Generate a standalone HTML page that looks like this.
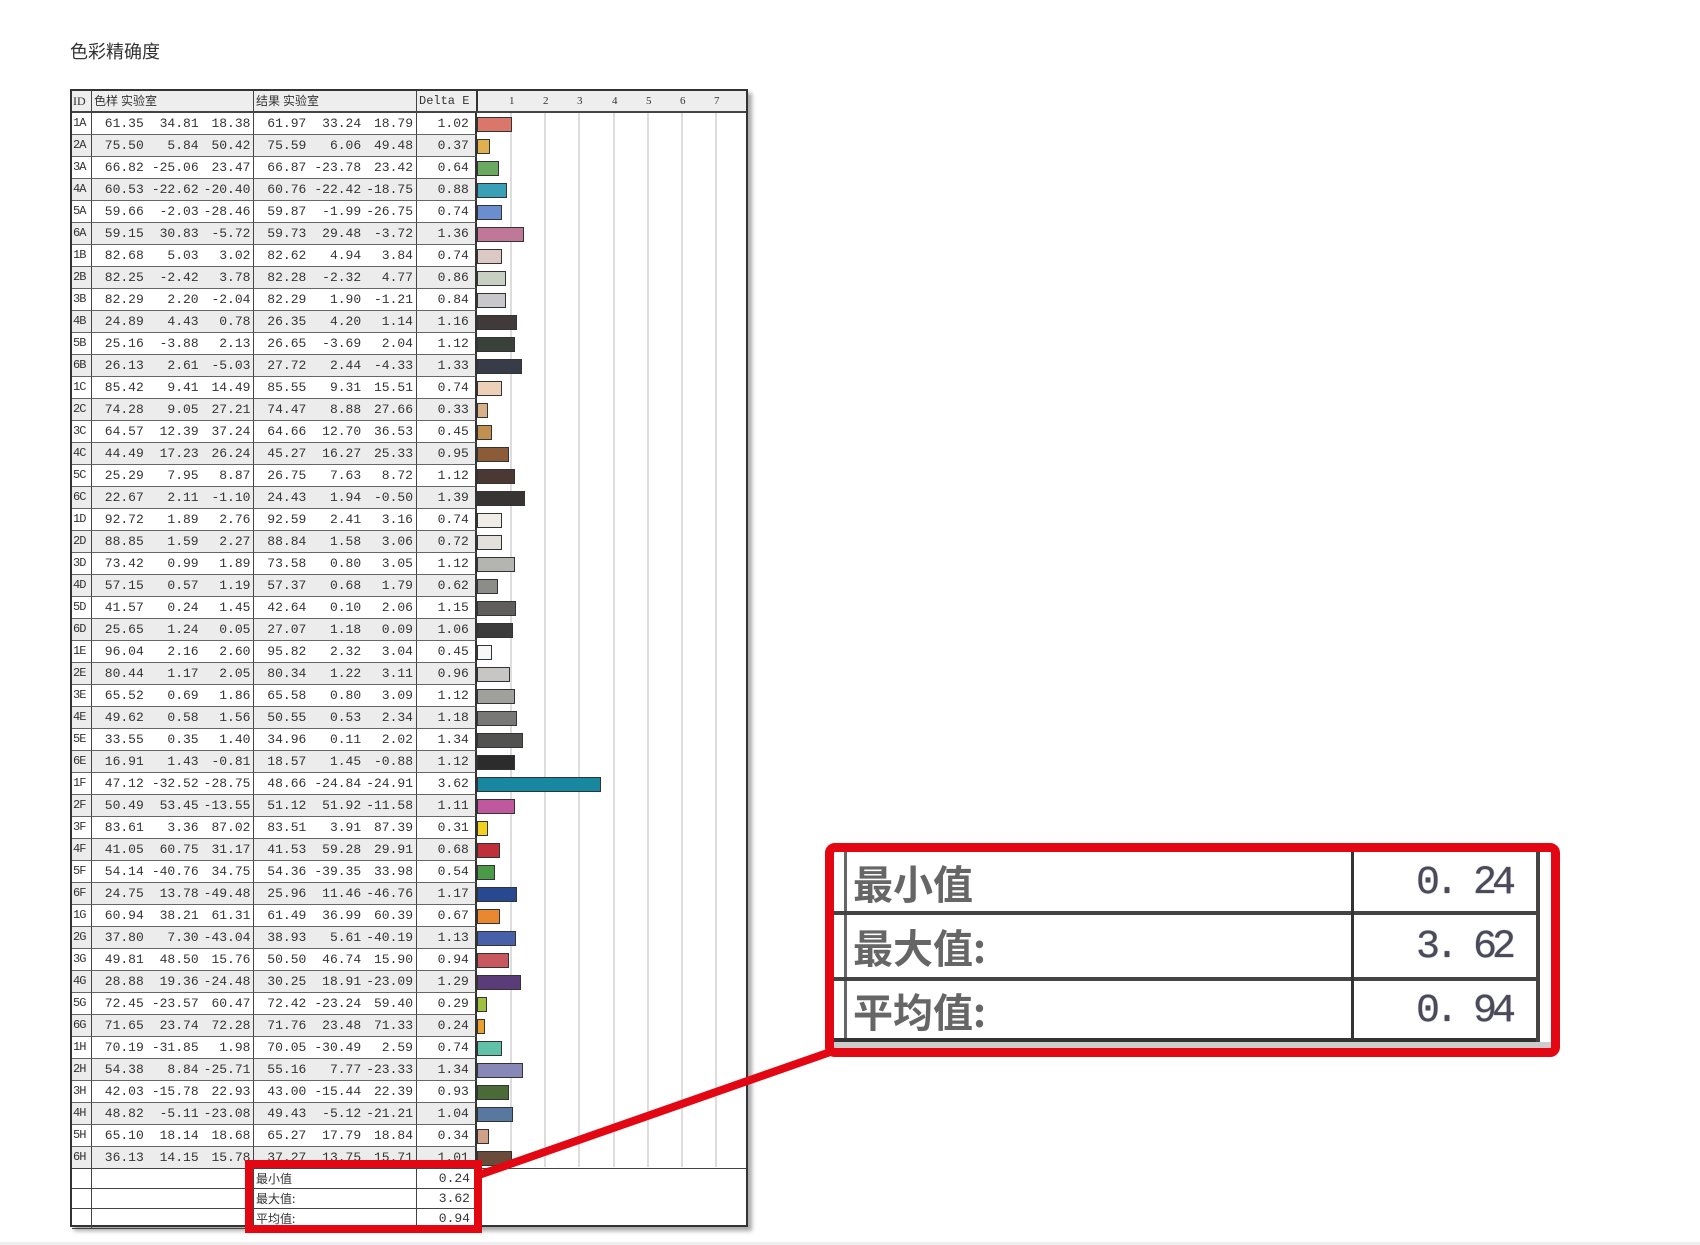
<!DOCTYPE html>
<html><head><meta charset="utf-8"><style>
*{margin:0;padding:0;box-sizing:border-box}
body{width:1700px;height:1245px;background:#fff;position:relative;overflow:hidden;font-family:"Liberation Mono","Noto Sans CJK SC",monospace;color:#333}
.title{position:absolute;left:70px;top:38px;font:18px "Liberation Sans","Noto Sans CJK SC",sans-serif;color:#333}
.tbl{position:absolute;left:70px;top:89px;width:678px;height:1138px;border:2px solid #333;box-shadow:4px 4px 4px #aaa;background:#fff}
.grid{position:absolute;left:406px;top:0;width:270px;height:1076px}
.grid b{position:absolute;top:0;bottom:0;width:2px;background:#ddd}
.r{position:absolute;left:0;width:674px;height:22px;display:flex;font-size:13px;line-height:21px}
.r span{display:block;height:22px;border-bottom:1px solid #666;text-align:right;padding-right:3px}
.r .id{width:20px;text-align:left;padding:0 0 0 1px;border-right:1px solid #444;font-size:12px;letter-spacing:-1px}
.r .n{width:55px}.r .n3{width:53px;border-right:1px solid #444}
.r .de{width:60px;border-right:2px solid #333;padding-right:6px}
.r.g span{background:#ececec}
.r .c{width:270px;border-bottom:none;position:relative;background:transparent!important}
.r .c i{position:absolute;left:0;top:4px;height:15px;border:1.5px solid #333;display:block}
.hd{position:absolute;left:0;top:0;width:674px;height:22px;background:#eee;border-bottom:2px solid #444;font:12px "Liberation Serif","Noto Sans CJK SC",serif;line-height:20px}
.hd span{position:absolute;top:0;height:20px}
.s{position:absolute;left:0;width:406px;height:20px;border-bottom:1px solid #444;font:12px "Noto Sans CJK SC",sans-serif;line-height:19px}
.s span{position:absolute;top:0;height:19px}
.big{position:absolute;left:825px;top:843px;width:735px;height:214px;border:9px solid #e30613;border-radius:10px;background:#fff;overflow:hidden}
.lb{position:absolute;left:19px;font:bold 40px 'Noto Sans CJK SC',sans-serif;line-height:52px;color:#666}
.vl{position:absolute;right:40px;font:40px 'Liberation Mono',monospace;line-height:52px;color:#4a4a5a;letter-spacing:-5px;text-shadow:0 0 1px #4a4a5a}
</style></head><body>
<div class="title">色彩精确度</div>
<div class="tbl">
<div class="hd">
<span style="left:1px">ID</span><span style="left:19px;top:0;bottom:0;border-left:1px solid #444;height:20px"></span>
<span style="left:22px">色样 实验室</span>
<span style="left:181px;border-left:1px solid #444;height:20px;padding-left:2px">结果 实验室</span>
<span style="left:344px;border-left:1px solid #444;height:20px;padding-left:2px;font-family:'Liberation Mono';font-size:12px">Delta E</span>
<span style="left:404px;border-left:2px solid #333;height:20px"></span>
<span style="left:437px;font-size:11px">1</span><span style="left:471px;font-size:11px">2</span><span style="left:505px;font-size:11px">3</span><span style="left:540px;font-size:11px">4</span><span style="left:574px;font-size:11px">5</span><span style="left:608px;font-size:11px">6</span><span style="left:642px;font-size:11px">7</span>
</div>
<div class="grid" style="top:22px;height:1054px"><b style="left:32px"></b><b style="left:66px"></b><b style="left:100px"></b><b style="left:135px"></b><b style="left:169px"></b><b style="left:203px"></b><b style="left:237px"></b></div>
<div class="r" style="top:22px"><span class="id">1A</span><span class="n">61.35</span><span class="n">34.81</span><span class="n n3">18.38</span><span class="n">61.97</span><span class="n">33.24</span><span class="n n3">18.79</span><span class="de">1.02</span><span class="c"><i style="width:35px;background:#d9776a"></i></span></div>
<div class="r g" style="top:44px"><span class="id">2A</span><span class="n">75.50</span><span class="n">5.84</span><span class="n n3">50.42</span><span class="n">75.59</span><span class="n">6.06</span><span class="n n3">49.48</span><span class="de">0.37</span><span class="c"><i style="width:13px;background:#e0b050"></i></span></div>
<div class="r" style="top:66px"><span class="id">3A</span><span class="n">66.82</span><span class="n">-25.06</span><span class="n n3">23.47</span><span class="n">66.87</span><span class="n">-23.78</span><span class="n n3">23.42</span><span class="de">0.64</span><span class="c"><i style="width:22px;background:#6aaa60"></i></span></div>
<div class="r g" style="top:88px"><span class="id">4A</span><span class="n">60.53</span><span class="n">-22.62</span><span class="n n3">-20.40</span><span class="n">60.76</span><span class="n">-22.42</span><span class="n n3">-18.75</span><span class="de">0.88</span><span class="c"><i style="width:30px;background:#3aa0b8"></i></span></div>
<div class="r" style="top:110px"><span class="id">5A</span><span class="n">59.66</span><span class="n">-2.03</span><span class="n n3">-28.46</span><span class="n">59.87</span><span class="n">-1.99</span><span class="n n3">-26.75</span><span class="de">0.74</span><span class="c"><i style="width:25px;background:#6a8ed0"></i></span></div>
<div class="r g" style="top:132px"><span class="id">6A</span><span class="n">59.15</span><span class="n">30.83</span><span class="n n3">-5.72</span><span class="n">59.73</span><span class="n">29.48</span><span class="n n3">-3.72</span><span class="de">1.36</span><span class="c"><i style="width:47px;background:#c07898"></i></span></div>
<div class="r" style="top:154px"><span class="id">1B</span><span class="n">82.68</span><span class="n">5.03</span><span class="n n3">3.02</span><span class="n">82.62</span><span class="n">4.94</span><span class="n n3">3.84</span><span class="de">0.74</span><span class="c"><i style="width:25px;background:#dcc8c4"></i></span></div>
<div class="r g" style="top:176px"><span class="id">2B</span><span class="n">82.25</span><span class="n">-2.42</span><span class="n n3">3.78</span><span class="n">82.28</span><span class="n">-2.32</span><span class="n n3">4.77</span><span class="de">0.86</span><span class="c"><i style="width:29px;background:#c8d0c4"></i></span></div>
<div class="r" style="top:198px"><span class="id">3B</span><span class="n">82.29</span><span class="n">2.20</span><span class="n n3">-2.04</span><span class="n">82.29</span><span class="n">1.90</span><span class="n n3">-1.21</span><span class="de">0.84</span><span class="c"><i style="width:29px;background:#c8c8cc"></i></span></div>
<div class="r g" style="top:220px"><span class="id">4B</span><span class="n">24.89</span><span class="n">4.43</span><span class="n n3">0.78</span><span class="n">26.35</span><span class="n">4.20</span><span class="n n3">1.14</span><span class="de">1.16</span><span class="c"><i style="width:40px;background:#403a3a"></i></span></div>
<div class="r" style="top:242px"><span class="id">5B</span><span class="n">25.16</span><span class="n">-3.88</span><span class="n n3">2.13</span><span class="n">26.65</span><span class="n">-3.69</span><span class="n n3">2.04</span><span class="de">1.12</span><span class="c"><i style="width:38px;background:#3a403a"></i></span></div>
<div class="r g" style="top:264px"><span class="id">6B</span><span class="n">26.13</span><span class="n">2.61</span><span class="n n3">-5.03</span><span class="n">27.72</span><span class="n">2.44</span><span class="n n3">-4.33</span><span class="de">1.33</span><span class="c"><i style="width:45px;background:#383c48"></i></span></div>
<div class="r" style="top:286px"><span class="id">1C</span><span class="n">85.42</span><span class="n">9.41</span><span class="n n3">14.49</span><span class="n">85.55</span><span class="n">9.31</span><span class="n n3">15.51</span><span class="de">0.74</span><span class="c"><i style="width:25px;background:#ecd0b8"></i></span></div>
<div class="r g" style="top:308px"><span class="id">2C</span><span class="n">74.28</span><span class="n">9.05</span><span class="n n3">27.21</span><span class="n">74.47</span><span class="n">8.88</span><span class="n n3">27.66</span><span class="de">0.33</span><span class="c"><i style="width:11px;background:#d8b088"></i></span></div>
<div class="r" style="top:330px"><span class="id">3C</span><span class="n">64.57</span><span class="n">12.39</span><span class="n n3">37.24</span><span class="n">64.66</span><span class="n">12.70</span><span class="n n3">36.53</span><span class="de">0.45</span><span class="c"><i style="width:15px;background:#c09050"></i></span></div>
<div class="r g" style="top:352px"><span class="id">4C</span><span class="n">44.49</span><span class="n">17.23</span><span class="n n3">26.24</span><span class="n">45.27</span><span class="n">16.27</span><span class="n n3">25.33</span><span class="de">0.95</span><span class="c"><i style="width:32px;background:#8c5c38"></i></span></div>
<div class="r" style="top:374px"><span class="id">5C</span><span class="n">25.29</span><span class="n">7.95</span><span class="n n3">8.87</span><span class="n">26.75</span><span class="n">7.63</span><span class="n n3">8.72</span><span class="de">1.12</span><span class="c"><i style="width:38px;background:#4a3832"></i></span></div>
<div class="r g" style="top:396px"><span class="id">6C</span><span class="n">22.67</span><span class="n">2.11</span><span class="n n3">-1.10</span><span class="n">24.43</span><span class="n">1.94</span><span class="n n3">-0.50</span><span class="de">1.39</span><span class="c"><i style="width:48px;background:#383434"></i></span></div>
<div class="r" style="top:418px"><span class="id">1D</span><span class="n">92.72</span><span class="n">1.89</span><span class="n n3">2.76</span><span class="n">92.59</span><span class="n">2.41</span><span class="n n3">3.16</span><span class="de">0.74</span><span class="c"><i style="width:25px;background:#f0ece8"></i></span></div>
<div class="r g" style="top:440px"><span class="id">2D</span><span class="n">88.85</span><span class="n">1.59</span><span class="n n3">2.27</span><span class="n">88.84</span><span class="n">1.58</span><span class="n n3">3.06</span><span class="de">0.72</span><span class="c"><i style="width:25px;background:#e4e0dc"></i></span></div>
<div class="r" style="top:462px"><span class="id">3D</span><span class="n">73.42</span><span class="n">0.99</span><span class="n n3">1.89</span><span class="n">73.58</span><span class="n">0.80</span><span class="n n3">3.05</span><span class="de">1.12</span><span class="c"><i style="width:38px;background:#b4b4b0"></i></span></div>
<div class="r g" style="top:484px"><span class="id">4D</span><span class="n">57.15</span><span class="n">0.57</span><span class="n n3">1.19</span><span class="n">57.37</span><span class="n">0.68</span><span class="n n3">1.79</span><span class="de">0.62</span><span class="c"><i style="width:21px;background:#8c8c88"></i></span></div>
<div class="r" style="top:506px"><span class="id">5D</span><span class="n">41.57</span><span class="n">0.24</span><span class="n n3">1.45</span><span class="n">42.64</span><span class="n">0.10</span><span class="n n3">2.06</span><span class="de">1.15</span><span class="c"><i style="width:39px;background:#605e5c"></i></span></div>
<div class="r g" style="top:528px"><span class="id">6D</span><span class="n">25.65</span><span class="n">1.24</span><span class="n n3">0.05</span><span class="n">27.07</span><span class="n">1.18</span><span class="n n3">0.09</span><span class="de">1.06</span><span class="c"><i style="width:36px;background:#3c3c3c"></i></span></div>
<div class="r" style="top:550px"><span class="id">1E</span><span class="n">96.04</span><span class="n">2.16</span><span class="n n3">2.60</span><span class="n">95.82</span><span class="n">2.32</span><span class="n n3">3.04</span><span class="de">0.45</span><span class="c"><i style="width:15px;background:#f8f8f8"></i></span></div>
<div class="r g" style="top:572px"><span class="id">2E</span><span class="n">80.44</span><span class="n">1.17</span><span class="n n3">2.05</span><span class="n">80.34</span><span class="n">1.22</span><span class="n n3">3.11</span><span class="de">0.96</span><span class="c"><i style="width:33px;background:#c8c6c4"></i></span></div>
<div class="r" style="top:594px"><span class="id">3E</span><span class="n">65.52</span><span class="n">0.69</span><span class="n n3">1.86</span><span class="n">65.58</span><span class="n">0.80</span><span class="n n3">3.09</span><span class="de">1.12</span><span class="c"><i style="width:38px;background:#a0a09c"></i></span></div>
<div class="r g" style="top:616px"><span class="id">4E</span><span class="n">49.62</span><span class="n">0.58</span><span class="n n3">1.56</span><span class="n">50.55</span><span class="n">0.53</span><span class="n n3">2.34</span><span class="de">1.18</span><span class="c"><i style="width:40px;background:#787876"></i></span></div>
<div class="r" style="top:638px"><span class="id">5E</span><span class="n">33.55</span><span class="n">0.35</span><span class="n n3">1.40</span><span class="n">34.96</span><span class="n">0.11</span><span class="n n3">2.02</span><span class="de">1.34</span><span class="c"><i style="width:46px;background:#525250"></i></span></div>
<div class="r g" style="top:660px"><span class="id">6E</span><span class="n">16.91</span><span class="n">1.43</span><span class="n n3">-0.81</span><span class="n">18.57</span><span class="n">1.45</span><span class="n n3">-0.88</span><span class="de">1.12</span><span class="c"><i style="width:38px;background:#2c2c2c"></i></span></div>
<div class="r" style="top:682px"><span class="id">1F</span><span class="n">47.12</span><span class="n">-32.52</span><span class="n n3">-28.75</span><span class="n">48.66</span><span class="n">-24.84</span><span class="n n3">-24.91</span><span class="de">3.62</span><span class="c"><i style="width:124px;background:#1888a0"></i></span></div>
<div class="r g" style="top:704px"><span class="id">2F</span><span class="n">50.49</span><span class="n">53.45</span><span class="n n3">-13.55</span><span class="n">51.12</span><span class="n">51.92</span><span class="n n3">-11.58</span><span class="de">1.11</span><span class="c"><i style="width:38px;background:#c058a0"></i></span></div>
<div class="r" style="top:726px"><span class="id">3F</span><span class="n">83.61</span><span class="n">3.36</span><span class="n n3">87.02</span><span class="n">83.51</span><span class="n">3.91</span><span class="n n3">87.39</span><span class="de">0.31</span><span class="c"><i style="width:11px;background:#f0d020"></i></span></div>
<div class="r g" style="top:748px"><span class="id">4F</span><span class="n">41.05</span><span class="n">60.75</span><span class="n n3">31.17</span><span class="n">41.53</span><span class="n">59.28</span><span class="n n3">29.91</span><span class="de">0.68</span><span class="c"><i style="width:23px;background:#c03038"></i></span></div>
<div class="r" style="top:770px"><span class="id">5F</span><span class="n">54.14</span><span class="n">-40.76</span><span class="n n3">34.75</span><span class="n">54.36</span><span class="n">-39.35</span><span class="n n3">33.98</span><span class="de">0.54</span><span class="c"><i style="width:18px;background:#4a9a48"></i></span></div>
<div class="r g" style="top:792px"><span class="id">6F</span><span class="n">24.75</span><span class="n">13.78</span><span class="n n3">-49.48</span><span class="n">25.96</span><span class="n">11.46</span><span class="n n3">-46.76</span><span class="de">1.17</span><span class="c"><i style="width:40px;background:#284890"></i></span></div>
<div class="r" style="top:814px"><span class="id">1G</span><span class="n">60.94</span><span class="n">38.21</span><span class="n n3">61.31</span><span class="n">61.49</span><span class="n">36.99</span><span class="n n3">60.39</span><span class="de">0.67</span><span class="c"><i style="width:23px;background:#e88830"></i></span></div>
<div class="r g" style="top:836px"><span class="id">2G</span><span class="n">37.80</span><span class="n">7.30</span><span class="n n3">-43.04</span><span class="n">38.93</span><span class="n">5.61</span><span class="n n3">-40.19</span><span class="de">1.13</span><span class="c"><i style="width:39px;background:#4860a8"></i></span></div>
<div class="r" style="top:858px"><span class="id">3G</span><span class="n">49.81</span><span class="n">48.50</span><span class="n n3">15.76</span><span class="n">50.50</span><span class="n">46.74</span><span class="n n3">15.90</span><span class="de">0.94</span><span class="c"><i style="width:32px;background:#c85860"></i></span></div>
<div class="r g" style="top:880px"><span class="id">4G</span><span class="n">28.88</span><span class="n">19.36</span><span class="n n3">-24.48</span><span class="n">30.25</span><span class="n">18.91</span><span class="n n3">-23.09</span><span class="de">1.29</span><span class="c"><i style="width:44px;background:#5a3c78"></i></span></div>
<div class="r" style="top:902px"><span class="id">5G</span><span class="n">72.45</span><span class="n">-23.57</span><span class="n n3">60.47</span><span class="n">72.42</span><span class="n">-23.24</span><span class="n n3">59.40</span><span class="de">0.29</span><span class="c"><i style="width:10px;background:#a0c040"></i></span></div>
<div class="r g" style="top:924px"><span class="id">6G</span><span class="n">71.65</span><span class="n">23.74</span><span class="n n3">72.28</span><span class="n">71.76</span><span class="n">23.48</span><span class="n n3">71.33</span><span class="de">0.24</span><span class="c"><i style="width:8px;background:#e8a030"></i></span></div>
<div class="r" style="top:946px"><span class="id">1H</span><span class="n">70.19</span><span class="n">-31.85</span><span class="n n3">1.98</span><span class="n">70.05</span><span class="n">-30.49</span><span class="n n3">2.59</span><span class="de">0.74</span><span class="c"><i style="width:25px;background:#60c0a8"></i></span></div>
<div class="r g" style="top:968px"><span class="id">2H</span><span class="n">54.38</span><span class="n">8.84</span><span class="n n3">-25.71</span><span class="n">55.16</span><span class="n">7.77</span><span class="n n3">-23.33</span><span class="de">1.34</span><span class="c"><i style="width:46px;background:#8888b8"></i></span></div>
<div class="r" style="top:990px"><span class="id">3H</span><span class="n">42.03</span><span class="n">-15.78</span><span class="n n3">22.93</span><span class="n">43.00</span><span class="n">-15.44</span><span class="n n3">22.39</span><span class="de">0.93</span><span class="c"><i style="width:32px;background:#4a6a38"></i></span></div>
<div class="r g" style="top:1012px"><span class="id">4H</span><span class="n">48.82</span><span class="n">-5.11</span><span class="n n3">-23.08</span><span class="n">49.43</span><span class="n">-5.12</span><span class="n n3">-21.21</span><span class="de">1.04</span><span class="c"><i style="width:36px;background:#5878a0"></i></span></div>
<div class="r" style="top:1034px"><span class="id">5H</span><span class="n">65.10</span><span class="n">18.14</span><span class="n n3">18.68</span><span class="n">65.27</span><span class="n">17.79</span><span class="n n3">18.84</span><span class="de">0.34</span><span class="c"><i style="width:12px;background:#d0a088"></i></span></div>
<div class="r g" style="top:1056px"><span class="id">6H</span><span class="n">36.13</span><span class="n">14.15</span><span class="n n3">15.78</span><span class="n">37.27</span><span class="n">13.75</span><span class="n n3">15.71</span><span class="de">1.01</span><span class="c"><i style="width:35px;background:#6a4a38"></i></span></div>
<div style="position:absolute;left:0;top:1077px;width:674px;height:1px;background:#444"></div>
<div class="s" style="top:1078px"><span style="left:19px;height:20px;border-left:1px solid #444"></span><span style="left:181px;height:20px;border-left:1px solid #444;padding-left:2px">最小值</span><span style="left:344px;width:60px;height:20px;border-left:1px solid #444;text-align:right;padding-right:6px;font:13px 'Liberation Mono',monospace;line-height:19px">0.24</span></div>
<div class="s" style="top:1098px"><span style="left:19px;height:20px;border-left:1px solid #444"></span><span style="left:181px;height:20px;border-left:1px solid #444;padding-left:2px">最大值:</span><span style="left:344px;width:60px;height:20px;border-left:1px solid #444;text-align:right;padding-right:6px;font:13px 'Liberation Mono',monospace;line-height:19px">3.62</span></div>
<div class="s" style="top:1118px"><span style="left:19px;height:20px;border-left:1px solid #444"></span><span style="left:181px;height:20px;border-left:1px solid #444;padding-left:2px">平均值:</span><span style="left:344px;width:60px;height:20px;border-left:1px solid #444;text-align:right;padding-right:6px;font:13px 'Liberation Mono',monospace;line-height:19px">0.94</span></div>
</div>
<div style="position:absolute;left:0;top:1242px;width:1700px;height:3px;background:#eee"></div>
<div style="position:absolute;left:245px;top:1160px;width:237px;height:73px;border:8px solid #e30613"></div>
<svg style="position:absolute;left:0;top:0" width="1700" height="1245"><line x1="476" y1="1176" x2="836" y2="1050" stroke="#e30613" stroke-width="8"/></svg>
<div class="big">
<div style="position:absolute;left:10px;top:0;width:3px;height:187px;background:#666"></div>
<div style="position:absolute;left:0;top:59px;width:705px;height:4px;background:#444"></div>
<div style="position:absolute;left:0;top:125px;width:705px;height:4px;background:#444"></div>
<div style="position:absolute;left:0;top:186px;width:705px;height:4px;background:#333"></div>
<div style="position:absolute;left:0;top:190px;width:720px;height:8px;background:#ccc"></div>
<div style="position:absolute;left:517px;top:0;width:3px;height:190px;background:#333"></div>
<div style="position:absolute;left:702px;top:0;width:4px;height:190px;background:#444"></div>
<div class="lb" style="top:4px">最小值</div>
<div class="lb" style="top:68px">最大值:</div>
<div class="lb" style="top:132px">平均值:</div>
<div class="vl" style="top:6px">0. 24</div>
<div class="vl" style="top:70px">3. 62</div>
<div class="vl" style="top:134px">0. 94</div>
</div>
</body></html>
